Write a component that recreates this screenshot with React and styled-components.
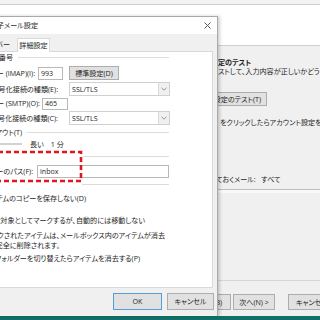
import React from 'react'
import styled, { createGlobalStyle } from 'styled-components'

// visible x where the tab page content starts (it lies off the left edge)
const INSET = 144

const GlobalStyle = createGlobalStyle`
  html, body {
    margin: 0;
    padding: 0;
    width: 320px;
    height: 320px;
    overflow: hidden;
  }
  body {
    font-family: "Open Sans", "Noto Sans CJK JP", sans-serif;
    font-feature-settings: "palt";
    font-size: 7.1px;
    line-height: 9px;
    color: #1e1e1e;
  }
`

const Desktop = styled.div`
  position: relative;
  width: 320px;
  height: 320px;
  overflow: hidden;
  background: #12706a;
`

const Window = styled.div`
  position: absolute;
  left: 0;
  top: 0;
  width: 320px;
  height: 316px;
  display: flex;
  flex-direction: column;
  background: #f0f0f0;
`

const TopStrip = styled.div`
  height: 4px;
  background: #f3f3f3;
  border-bottom: 1px solid #cdcdcd;
`

const Header = styled.div`
  height: 40px;
  background: #fff;
  border-bottom: 1px solid #cfcfcf;
`

const WinBody = styled.div`
  flex: 1;
  display: flex;
  flex-direction: column;
  padding-left: 150px;
`

const BgText = styled.div`
  margin-left: ${p => p.$x - 150}px;
  margin-top: ${p => p.$mt || 0}px;
  font-weight: ${p => (p.$bold ? 700 : 400)};
  white-space: nowrap;
`

const BgButton = styled.div`
  width: ${p => p.$w}px;
  height: 14px;
  margin-top: ${p => p.$mt || 0}px;
  box-sizing: border-box;
  display: flex;
  align-items: center;
  justify-content: flex-end;
  padding-right: 5px;
  background: #e1e1e1;
  border: 1px solid #adadad;
  white-space: nowrap;
`

const SliderTrack = styled.div`
  margin-top: 5px;
  margin-left: 68px;
  height: 1px;
  background: #bdbdbd;
  border-bottom: 3px solid #f9f9f9;
`

const Ticks = styled.div`
  display: flex;
  gap: 27px;
  margin-top: 3px;
  margin-left: 92px;
`

const Tick = styled.div`
  width: 1px;
  height: 2px;
  background: #9a9a9a;
`

const Spacer = styled.div`
  flex: 1;
`

const WinFooter = styled.div`
  height: 36px;
  margin-left: -150px;
  border-top: 1px solid #d6d6d6;
  display: flex;
  align-items: flex-start;
  padding-top: 13px;
  padding-left: 185px;
  box-sizing: border-box;
`

const WinButton = styled.div`
  flex: none;
  width: ${p => p.$w}px;
  height: 16px;
  margin-left: ${p => p.$ml || 0}px;
  box-sizing: border-box;
  display: flex;
  align-items: center;
  justify-content: center;
  background: #e1e1e1;
  border: 1px solid #adadad;
  white-space: nowrap;
`

const Dialog = styled.div`
  position: absolute;
  left: -150px;
  top: 16px;
  width: 368px;
  height: 300px;
  box-sizing: border-box;
  display: flex;
  flex-direction: column;
  background: #f0f0f0;
  border: 1px solid #a9a9a9;
  border-bottom: none;
  box-shadow: 2px 0 3px rgba(0, 0, 0, 0.18);
`

const TitleBar = styled.div`
  height: 17px;
  flex: none;
  display: flex;
  align-items: center;
  justify-content: space-between;
  background: #fff;
  padding-right: 6px;
`

const EndCell = styled.div`
  flex: none;
  width: ${p => p.$end + (p.$inset ?? INSET)}px;
  display: flex;
  align-items: center;
  justify-content: flex-end;
  gap: ${p => p.$gap || 0}px;
  white-space: nowrap;
`

const TabRow = styled.div`
  height: 17px;
  flex: none;
  display: flex;
  align-items: flex-end;
`

const Tab = styled.div`
  padding: 0 5px;
  height: 13px;
  display: flex;
  align-items: center;
`

const ActiveTab = styled.div`
  margin-left: 2px;
  width: 33px;
  height: 14px;
  box-sizing: border-box;
  display: flex;
  align-items: center;
  justify-content: center;
  background: #fff;
  border: 1px solid #d9d9d9;
  border-bottom: none;
  margin-bottom: -1px;
  position: relative;
`

const Panel = styled.div`
  flex: none;
  height: 237px;
  margin-left: 4px;
  margin-right: 4px;
  box-sizing: border-box;
  background: #fff;
  border: 1px solid #d9d9d9;
  display: flex;
  flex-direction: column;
`

const Row = styled.div`
  flex: none;
  height: ${p => p.$h}px;
  margin-top: ${p => p.$mt || 0}px;
  display: flex;
  align-items: center;
`

const Rule = styled.div`
  flex: none;
  width: ${p => p.$w}px;
  margin-left: ${p => p.$ml || 0}px;
  height: 1px;
  background: #dcdcdc;
`

const Field = styled.div`
  flex: none;
  width: ${p => p.$w}px;
  height: ${p => p.$h || 13}px;
  margin-left: ${p => p.$ml || 0}px;
  box-sizing: border-box;
  display: flex;
  align-items: center;
  padding-left: 2px;
  background: #fff;
  border: 1px solid #b8b8b8;
  white-space: nowrap;
`

const Select = styled(Field)`
  height: 14px;
  padding-left: 0;
  border-color: #d0d0d0;
  justify-content: space-between;
`

const SelectValue = styled.span`
  padding-left: 2px;
`

const Arrow = styled.span`
  width: 10px;
  height: 12px;
  display: flex;
  align-items: center;
  justify-content: center;
  background: #f0f0f0;
  border-left: 1px solid #d9d9d9;
`

const PushButton = styled.div`
  flex: none;
  width: ${p => p.$w}px;
  height: ${p => p.$h || 14}px;
  margin-left: ${p => p.$ml || 0}px;
  box-sizing: border-box;
  display: flex;
  align-items: center;
  justify-content: center;
  background: #e1e1e1;
  border: 1px solid ${p => (p.$default ? '#4f9ede' : '#adadad')};
  white-space: nowrap;
`

const Check = styled.span`
  width: 8px;
  height: 8px;
  box-sizing: border-box;
  border: 1px solid #333;
  background: #fff;
`

const Track = styled.span`
  width: 90px;
  height: 2px;
  background: #d2d2d2;
`

const Scale = styled.span`
  margin-left: ${p => p.$ml}px;
`

const Footer = styled.div`
  flex: none;
  display: flex;
  justify-content: flex-end;
  gap: 5px;
  padding-top: 5px;
  padding-right: 3px;
`

const Annotation = styled.svg`
  position: absolute;
  left: -10px;
  top: 150px;
  overflow: visible;
`

function Chevron () {
  return (
    <svg width='6' height='4' viewBox='0 0 6 4'>
      <path d='M0.5 0.8 L3 3.2 L5.5 0.8' fill='none' stroke='#8a8a8a' strokeWidth='0.9' />
    </svg>
  )
}

function CloseIcon () {
  return (
    <svg width='7' height='7' viewBox='0 0 7 7'>
      <path d='M0.5 0.5 L6.5 6.5 M6.5 0.5 L0.5 6.5' stroke='#555' strokeWidth='1' />
    </svg>
  )
}

function SslSelect () {
  return (
    <Select $w={101} $ml={11}>
      <SelectValue>SSL/TLS</SelectValue>
      <Arrow><Chevron /></Arrow>
    </Select>
  )
}

export default function App () {
  return (
    <>
      <GlobalStyle />
      <Desktop>
        <Window>
          <TopStrip />
          <Header />
          <WinBody>
            <BgText $x={218} $mt={12} $bold>定のテスト</BgText>
            <BgText $x={218}>ストして、入力内容が正しいかどうかを確認することをお勧めします。</BgText>
            <BgButton $w={117} $mt={16}>アカウント設定のテスト(T)</BgButton>
            <BgText $x={220} $mt={12}>をクリックしたらアカウント設定を自動的にテストする(S)</BgText>
            <BgText $x={216} $mt={48}>ておくメール:&nbsp;&nbsp;&nbsp;すべて</BgText>
            <SliderTrack />
            <Ticks>
              <Tick /><Tick /><Tick /><Tick />
            </Ticks>
            <Spacer />
            <WinFooter>
              <WinButton $w={46}>&lt; 戻る(B)</WinButton>
              <WinButton $w={42} $ml={2}>次へ(N) &gt;</WinButton>
              <WinButton $w={48} $ml={13}>キャンセル</WinButton>
            </WinFooter>
          </WinBody>
        </Window>

        <Dialog>
          <TitleBar>
            <EndCell $end={38} $inset={149}>インターネット電子メール設定</EndCell>
            <CloseIcon />
          </TitleBar>

          <TabRow>
            <EndCell $end={15} $inset={149}>
              <Tab>全般</Tab>
              <Tab>送信サーバー</Tab>
            </EndCell>
            <ActiveTab>詳細設定</ActiveTab>
          </TabRow>

          <Panel>
            <Row $h={11}>
              <EndCell $end={13}>サーバーのポート番号</EndCell>
              <Rule $w={151} $ml={5} />
            </Row>
            <Row $h={16} $mt={2}>
              <EndCell $end={35}>受信サーバー (IMAP)(I):</EndCell>
              <Field $w={25} $ml={3}>993</Field>
              <PushButton $w={50} $ml={6}>標準設定(D)</PushButton>
            </Row>
            <Row $h={16}>
              <EndCell $end={58}>使用する暗号化接続の種類(E):</EndCell>
              <SslSelect />
            </Row>
            <Row $h={13}>
              <EndCell $end={40}>送信サーバー (SMTP)(O):</EndCell>
              <Field $w={26} $h={12} $ml={2}>465</Field>
            </Row>
            <Row $h={16}>
              <EndCell $end={58}>使用する暗号化接続の種類(C):</EndCell>
              <SslSelect />
            </Row>
            <Row $h={13}>
              <EndCell $end={22}>サーバーのタイムアウト(T)</EndCell>
              <Rule $w={142} $ml={5} />
            </Row>
            <Row $h={10}>
              <EndCell $end={22} $gap={6}>短い<Track /></EndCell>
              <Scale $ml={8}>長い</Scale>
              <Scale $ml={7}>1 分</Scale>
            </Row>
            <Row $h={13} $mt={1}>
              <EndCell $end={83} />
              <Rule $w={86} />
            </Row>
            <Row $h={17}>
              <EndCell $end={33}>ルート フォルダーのパス(F):</EndCell>
              <Field $w={132} $ml={4}>inbox</Field>
            </Row>
            <Row $h={9}>
              <EndCell $end={82} />
              <Rule $w={87} />
            </Row>
            <Row $h={14} $mt={2}>
              <EndCell $end={86} $gap={4}><Check />送信済みアイテムのコピーを保存しない(D)</EndCell>
            </Row>
            <Row $h={12} $mt={9}>
              <EndCell $end={145} $gap={4}><Check />アイテムを削除対象としてマークするが、自動的には移動しない</EndCell>
            </Row>
            <Row $h={10} $mt={4}>
              <EndCell $end={165}>削除対象としてマークされたアイテムは、メールボックス内のアイテムが消去</EndCell>
            </Row>
            <Row $h={10}>
              <EndCell $end={60}>された時点で完全に削除されます。</EndCell>
            </Row>
            <Row $h={12} $mt={2}>
              <EndCell $end={140} $gap={4}><Check />オンライン中にフォルダーを切り替えたらアイテムを消去する(P)</EndCell>
            </Row>
          </Panel>

          <Footer>
            <PushButton $w={49} $h={17} $default>OK</PushButton>
            <PushButton $w={47} $h={17}>キャンセル</PushButton>
          </Footer>
        </Dialog>

        <Annotation width='92' height='33'>
          <rect x='0' y='2' width='91' height='29' fill='none' stroke='#e3141b' strokeWidth='2.6' strokeDasharray='5 3' />
        </Annotation>
      </Desktop>
    </>
  )
}
